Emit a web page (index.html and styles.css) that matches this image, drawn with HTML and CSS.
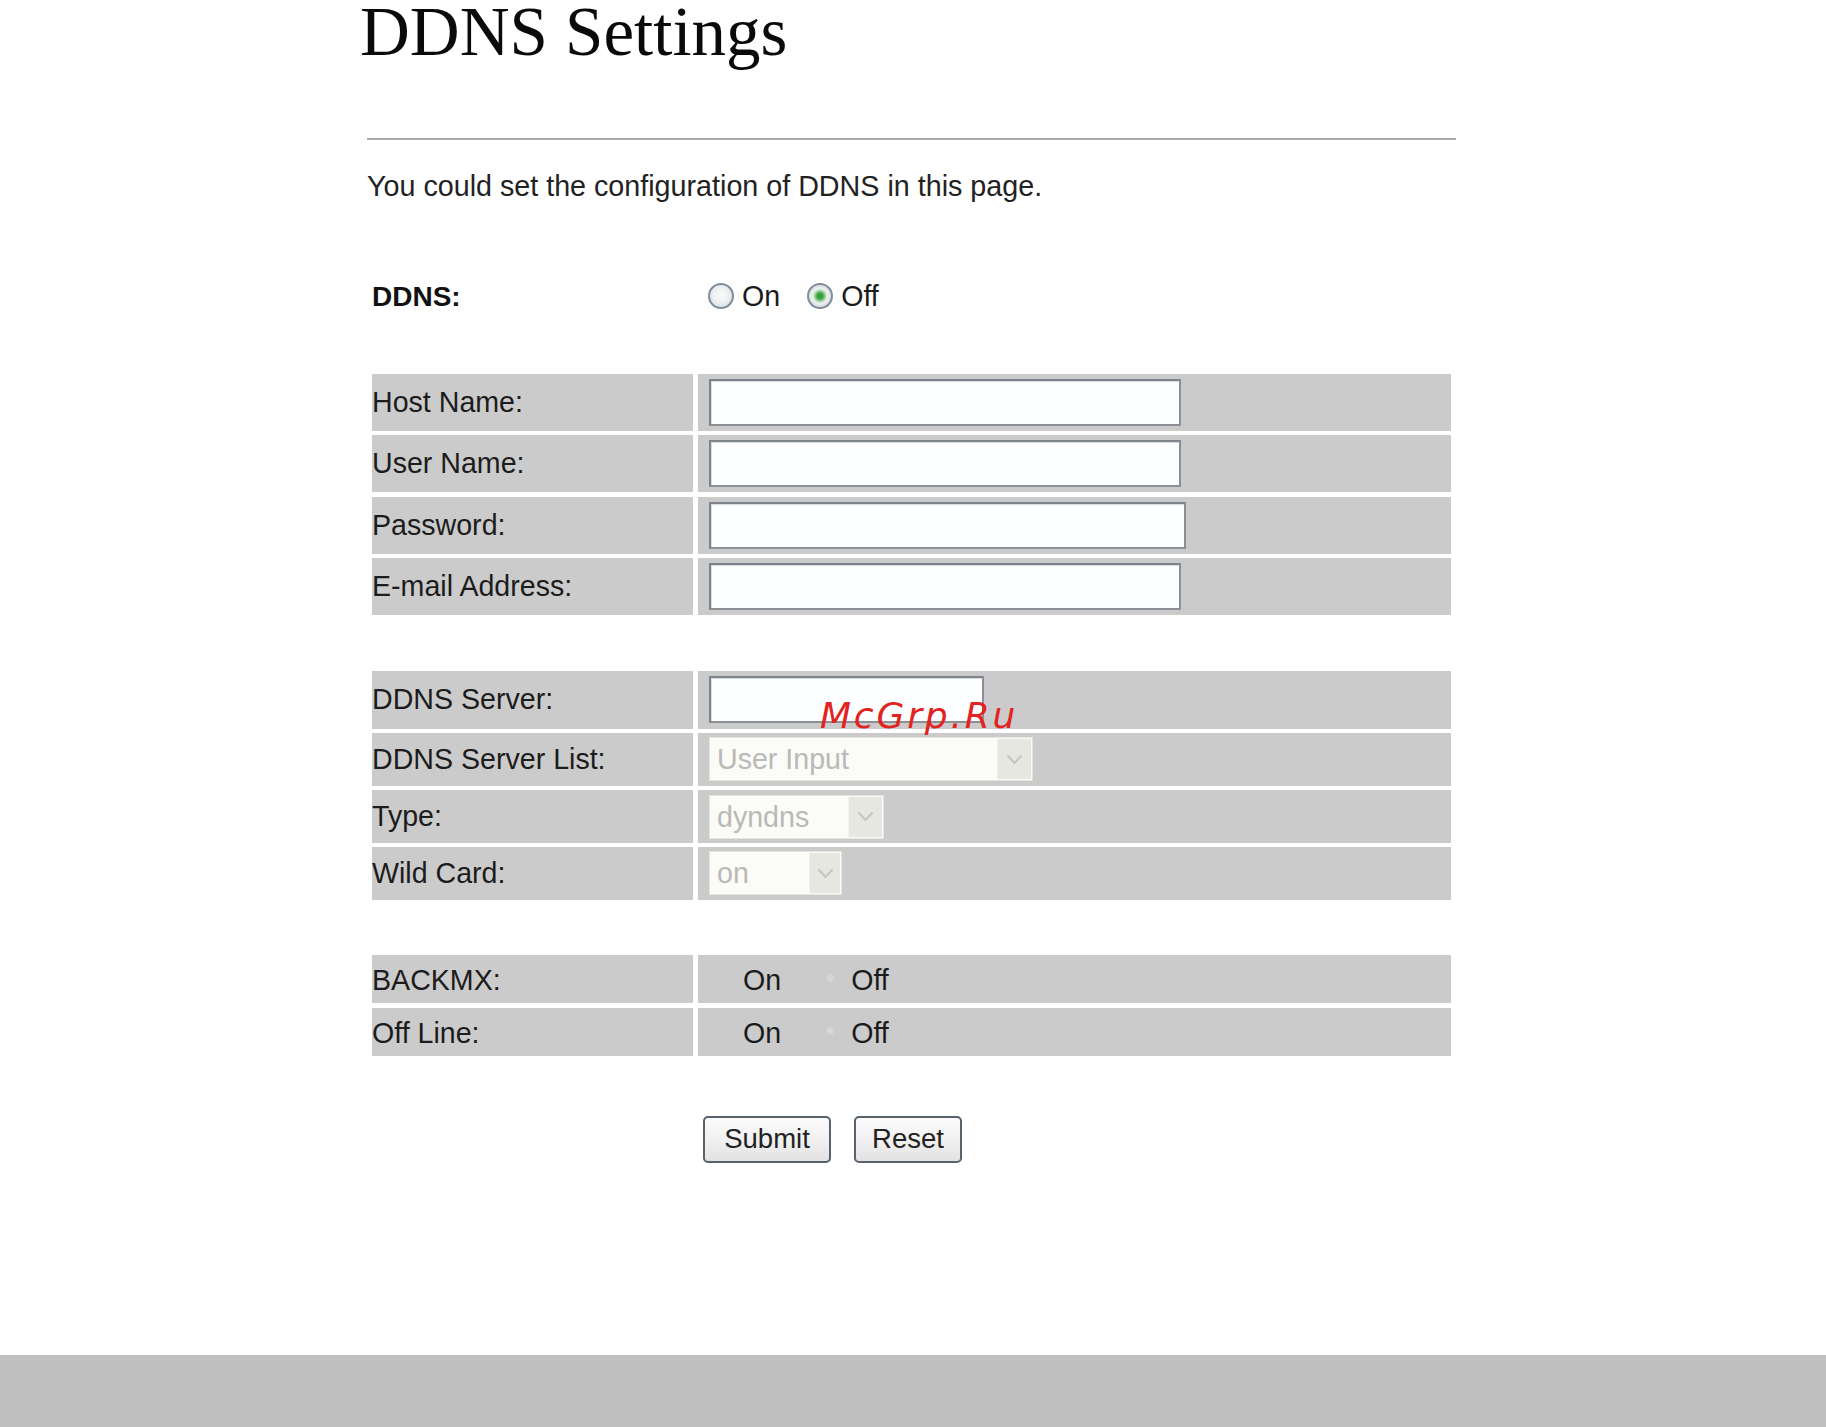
FILE: index.html
```html
<!DOCTYPE html>
<html lang="en">
<head>
<meta charset="utf-8">
<title>DDNS Settings</title>
<link rel="stylesheet" href="styles.css">
</head>
<body>
<div class="page">
  <h1 class="title">DDNS Settings</h1>
  <hr class="rule">
  <p class="intro">You could set the configuration of DDNS in this page.</p>

  <div class="ddns-row">
    <span class="ddns-label">DDNS:</span>
    <label class="opt"><input type="radio" name="ddns" class="radio">On</label>
    <label class="opt opt-second"><input type="radio" name="ddns" class="radio" checked>Off</label>
  </div>

  <div class="grid grid-account">
    <div class="cell label">Host Name:</div>
    <div class="cell value"><input type="text" class="field w-472"></div>
    <div class="cell label">User Name:</div>
    <div class="cell value"><input type="text" class="field w-472"></div>
    <div class="cell label">Password:</div>
    <div class="cell value"><input type="password" class="field w-476"></div>
    <div class="cell label">E-mail Address:</div>
    <div class="cell value"><input type="text" class="field w-472"></div>
  </div>

  <div class="grid grid-server">
    <div class="cell label">DDNS Server:</div>
    <div class="cell value"><input type="text" class="field w-275"></div>
    <div class="cell label">DDNS Server List:</div>
    <div class="cell value">
      <span class="select-wrap w-324">
        <select class="select" disabled><option>User Input</option></select>
        <span class="arrow"><svg width="17" height="11" viewBox="0 0 17 11"><path d="M1.5 1.5 L8.5 9 L15.5 1.5" fill="none" stroke="#c6c6c2" stroke-width="2.2"/></svg></span>
      </span>
    </div>
    <div class="cell label">Type:</div>
    <div class="cell value">
      <span class="select-wrap w-175">
        <select class="select" disabled><option>dyndns</option></select>
        <span class="arrow"><svg width="17" height="11" viewBox="0 0 17 11"><path d="M1.5 1.5 L8.5 9 L15.5 1.5" fill="none" stroke="#c6c6c2" stroke-width="2.2"/></svg></span>
      </span>
    </div>
    <div class="cell label">Wild Card:</div>
    <div class="cell value">
      <span class="select-wrap w-133">
        <select class="select" disabled><option>on</option></select>
        <span class="arrow arrow-narrow"><svg width="17" height="11" viewBox="0 0 17 11"><path d="M1.5 1.5 L8.5 9 L15.5 1.5" fill="none" stroke="#c6c6c2" stroke-width="2.2"/></svg></span>
      </span>
    </div>
  </div>

  <div class="grid grid-options">
    <div class="cell label">BACKMX:</div>
    <div class="cell value">
      <label class="opt"><input type="radio" name="backmx" class="radio faint">On</label>
      <label class="opt opt-wide"><input type="radio" name="backmx" class="radio faint dot">Off</label>
    </div>
    <div class="cell label">Off Line:</div>
    <div class="cell value">
      <label class="opt"><input type="radio" name="offline" class="radio faint">On</label>
      <label class="opt opt-wide"><input type="radio" name="offline" class="radio faint dot">Off</label>
    </div>
  </div>

  <div class="actions">
    <button type="button" class="btn btn-submit">Submit</button>
    <button type="button" class="btn btn-reset">Reset</button>
  </div>
</div>
<div class="footer-bar"></div>
<div class="watermark">McGrp.Ru</div>
</body>
</html>
```

FILE: styles.css
```css
html, body {
  margin: 0;
  padding: 0;
}
body {
  position: relative;
  min-height: 100vh;
  display: flex;
  flex-direction: column;
  background: #ffffff;
  font-family: "Liberation Sans", Arial, sans-serif;
  font-size: 28.6px;
  color: #1b1b1b;
}
.page {
  margin-left: 367px;
  width: 1089px;
  padding-top: 2px;
}
.title {
  margin: 0 0 0 -7px;
  font-family: "Liberation Serif", "Times New Roman", serif;
  font-weight: normal;
  font-size: 69px;
  line-height: 60px;
  color: #0a0a0a;
}
.rule {
  margin: 76px 0 0 0;
  height: 0;
  border: 0;
  border-top: 2px solid #ababab;
}
.intro {
  margin: 29.6px 0 0 0;
  line-height: 33px;
  font-size: 28.7px;
  color: #222222;
}
.ddns-row {
  margin-top: 77px;
  padding-left: 5px;
  height: 33px;
  display: flex;
  align-items: center;
  line-height: 33px;
}
.ddns-label {
  width: 336px;
  font-weight: bold;
  font-size: 28px;
  color: #111111;
}
.opt {
  display: flex;
  align-items: center;
  line-height: 33px;
}
.opt-second {
  margin-left: 27px;
}
.opt-wide {
  margin-left: 35px;
}
.radio {
  appearance: none;
  -webkit-appearance: none;
  margin: 0 8px 0 0;
  width: 26px;
  height: 26px;
  box-sizing: border-box;
  border-radius: 50%;
  border: 2px solid #7f8d9b;
  background: radial-gradient(circle at 50% 45%, #fbfbfb 0, #eef0f2 45%, #cfd5da 100%);
}
.radio:checked {
  background: radial-gradient(circle at 50% 50%, #2f9a32 0, #3fa642 3px, #a9d6a9 5.5px, #eef2ee 7.5px, #dfe4e8 10px, #c9d0d6 100%);
}
.radio.faint {
  border: 0;
  background: transparent;
  margin-right: 9px;
}
.radio.faint.dot {
  background: radial-gradient(circle at 55% 38%, #d9d9d9 0, #d6d6d6 2.5px, rgba(204,204,204,0) 5px);
}
.grid {
  margin-left: 4.5px;
  display: grid;
  grid-template-columns: 321.5px 753px;
  column-gap: 4.5px;
}
.grid-account {
  margin-top: 61.4px;
  grid-auto-rows: 57px;
  row-gap: 4.5px;
}
.grid-server {
  margin-top: 55.2px;
  grid-template-rows: 58px 53px 52.5px 52.5px;
  row-gap: 4.3px;
}
.grid-options {
  margin-top: 55.4px;
  grid-auto-rows: 48px;
  row-gap: 5px;
}
.cell {
  background: #cbcbcb;
  display: flex;
  align-items: center;
  line-height: 33px;
}
.label {
  padding-left: 0.5px;
  color: #1c1c1c;
}
.value {
  padding-left: 11.5px;
}
.grid-options .cell {
  padding-top: 4px;
  box-sizing: border-box;
}
.grid-options .value {
  padding-left: 10.5px;
}
.field {
  box-sizing: border-box;
  height: 47px;
  margin: 0;
  border: 2px solid #8a9096;
  border-top-color: #7d848b;
  border-left-color: #7d848b;
  border-radius: 0;
  box-shadow: inset 1px 1px 0 #d9dde1;
  background: #fcfeff;
  font: inherit;
  padding: 0 6px;
}
.w-472 { width: 472px; }
.w-476 { width: 476.5px; }
.w-275 { width: 275px; }
.w-324 { width: 324px; }
.w-175 { width: 175px; }
.w-133 { width: 133px; }
.select-wrap {
  position: relative;
  display: inline-block;
  height: 44px;
}
.select {
  appearance: none;
  -webkit-appearance: none;
  box-sizing: border-box;
  width: 100%;
  height: 100%;
  margin: 0;
  border: 1px solid #e4e4df;
  border-radius: 0;
  background: #fbfbf7;
  color: #b9b9b6;
  font-family: "Liberation Sans", Arial, sans-serif;
  font-size: 28.6px;
  padding: 0 0 0 7px;
  opacity: 1;
}
.arrow {
  position: absolute;
  top: 2px;
  bottom: 2px;
  right: 2px;
  width: 33px;
  background: #e7e7e2;
  border-left: 1px solid #f1f1ec;
  display: flex;
  align-items: center;
  justify-content: center;
}
.arrow-narrow {
  width: 30px;
}
.actions {
  margin-top: 60px;
  padding-left: 336px;
  display: flex;
  gap: 23px;
}
.btn {
  box-sizing: border-box;
  height: 47px;
  margin: 0;
  padding: 0;
  border: 2px solid #57626d;
  border-radius: 5px;
  background: linear-gradient(#fbfbfb, #f1f1f1 50%, #e2e2e2);
  font-family: "Liberation Sans", Arial, sans-serif;
  font-size: 27.5px;
  color: #222222;
}
.btn-submit { width: 128px; }
.btn-reset { width: 108px; }
.footer-bar {
  margin-top: auto;
  height: 72px;
  background: #bfbfbf;
}
.watermark {
  position: absolute;
  left: 820px;
  top: 697.5px;
  font-family: "DejaVu Sans", sans-serif;
  font-style: italic;
  font-size: 36px;
  line-height: 36px;
  letter-spacing: 2.8px;
  color: #e2231f;
}
```
